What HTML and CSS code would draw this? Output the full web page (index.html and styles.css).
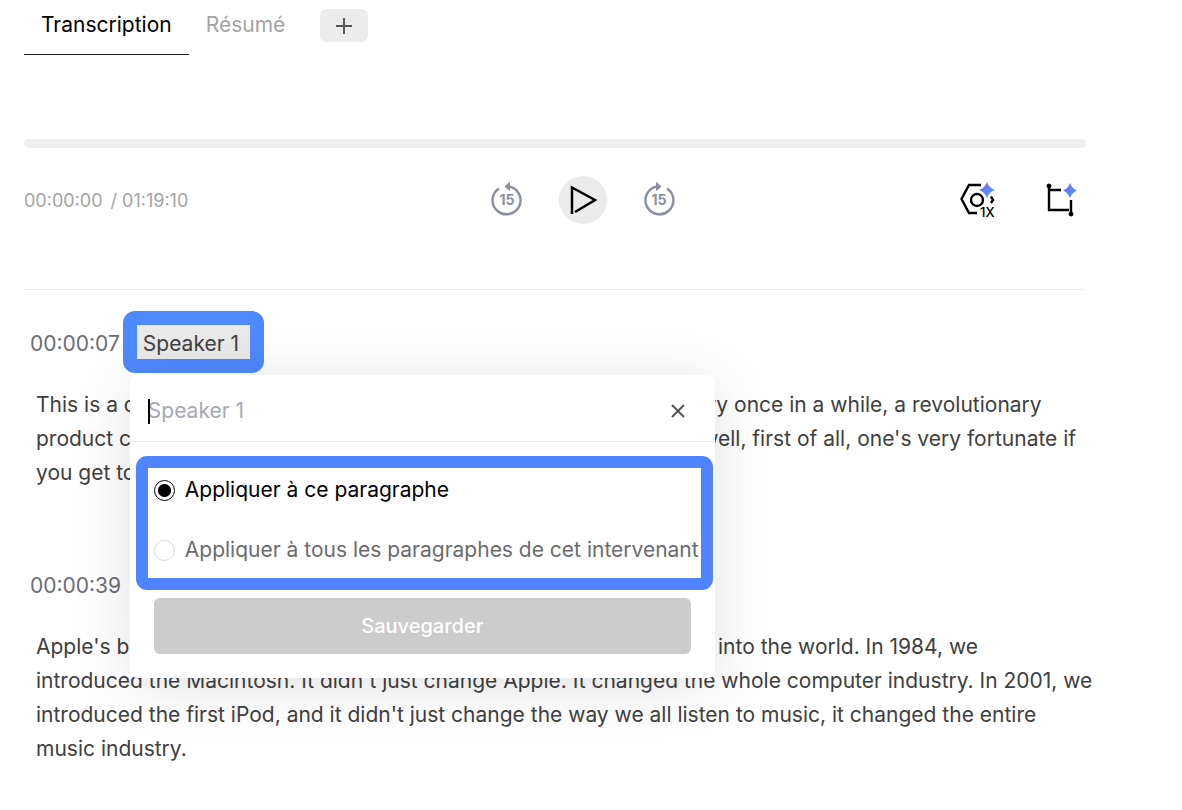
FILE: index.html
```
<!DOCTYPE html>
<html lang="fr">

<head>
    <meta charset="UTF-8">
    <meta name="viewport" content="width=device-width, initial-scale=1.0">
    <title>Transcription</title>
    <link rel="stylesheet" href="styles.css">
</head>

<body>

    <main>
        <nav class="tabs">
            <button class="tab active">Transcription</button>
            <button class="tab">Résumé</button>
            <button class="add-tab" aria-label="Ajouter">
                <svg width="16" height="16" viewBox="0 0 16 16"><path d="M8 0v16M0 8h16" stroke="#555" stroke-width="2"/></svg>
            </button>
        </nav>

        <div class="progress"></div>

        <div class="player">
            <div class="time"><span>00:00:00</span><span>/ 01:19:10</span></div>
            <div class="controls">
                <button class="skip" aria-label="Reculer de 15 secondes">
                    <svg width="32" height="36" viewBox="0 0 32 36" fill="none" stroke="#8b909c" stroke-width="2.400">
                        <path d="M8 8.500A14 14 0 1 0 18 6.500"/>
                        <path d="M14 6.500l4.500-4v8z" fill="#8b909c" stroke-width="1"/>
                        <text class="skip-text" x="16" y="25" text-anchor="middle">15</text>
                    </svg>
                </button>
                <button class="play" aria-label="Lecture">
                    <svg width="28" height="30" viewBox="0 0 28 30" fill="none" stroke="#000" stroke-width="2.500"><path d="M3 29V2.500L26 15 6 27"/></svg>
                </button>
                <button class="skip" aria-label="Avancer de 15 secondes">
                    <svg width="32" height="36" viewBox="0 0 32 36" fill="none" stroke="#8b909c" stroke-width="2.400">
                        <path d="M24 8.500A14 14 0 1 1 14 6.500"/>
                        <path d="M18 6.500l-4.500-4v8z" fill="#8b909c" stroke-width="1"/>
                        <text class="skip-text" x="16" y="25" text-anchor="middle">15</text>
                    </svg>
                </button>
            </div>
            <div class="tools">
                <button class="tool" aria-label="Vitesse de lecture">
                    <svg width="38" height="38" viewBox="0 0 38 38" fill="none" stroke="#000" stroke-width="2.400">
                        <defs>
                            <linearGradient id="spark" x1="0" y1="0" x2="1" y2="1">
                                <stop offset="0" stop-color="#7b61e0"/>
                                <stop offset="1" stop-color="#4aa5ff"/>
                            </linearGradient>
                        </defs>
                        <path d="M21 4H9L1.500 18 9 32h8"/>
                        <circle cx="17" cy="19" r="6"/>
                        <path d="M31 15.500l2 3.500-2 3"/>
                        <path d="M27 1q2 6 8 8-6 2-8 8-2-6-8-8 6-2 8-8z" fill="url(#spark)" stroke="none"/>
                        <text class="speed-text" x="20" y="36">1X</text>
                    </svg>
                </button>
                <button class="tool" aria-label="Rogner">
                    <svg width="38" height="38" viewBox="0 0 38 38" fill="none" stroke="#000" stroke-width="2.400">
                        <path d="M5 5v24h20M5 9h12M27 19v14"/>
                        <circle cx="5" cy="5" r="2" fill="#000" stroke-width="1"/>
                        <circle cx="27" cy="33" r="2" fill="#000" stroke-width="1"/>
                        <path d="M26 2q2 5.500 7 7.500-5 2-7 7.500-2-5.500-7-7.500 5-2 7-7.500z" fill="url(#spark)" stroke="none"/>
                    </svg>
                </button>
            </div>
        </div>

        <section class="transcript">
            <article class="entry">
                <div class="entry-head">
                    <span class="timestamp">00:00:07</span>
                    <div class="speaker">
                        <button class="speaker-name">Speaker 1</button>
                        <form class="popup">
                            <div class="popup-head">
                                <span class="caret"></span>
                                <input class="name-input" type="text" placeholder="Speaker 1" aria-label="Nom de l'intervenant">
                                <button class="close" type="button" aria-label="Fermer">
                                    <svg width="14" height="14" viewBox="0 0 14 14"><path d="M1 1l12 12M13 1L1 13" stroke="#555" stroke-width="2"/></svg>
                                </button>
                            </div>
                            <div class="options">
                                <label class="option"><input type="radio" name="scope" checked><span>Appliquer à ce paragraphe</span></label>
                                <label class="option"><input type="radio" name="scope"><span>Appliquer à tous les paragraphes de cet intervenant</span></label>
                            </div>
                            <button class="save" type="button">Sauvegarder</button>
                        </form>
                    </div>
                </div>
                <p>This is a day I've been looking forward to for 2 and a half years. Every once in a while, a revolutionary<br>
                    product comes along that changes everything and Apple has been well, first of all, one's very fortunate if<br>
                    you get to work on just one of these.</p>
            </article>
            <article class="entry">
                <div class="entry-head">
                    <span class="timestamp">00:00:39</span>
                </div>
                <p>Apple's been very fortunate. It's been able to introduce few of these into the world. In 1984, we<br>
                    introduced the Macintosh. It didn't just change Apple. It changed the whole computer industry. In 2001, we<br>
                    introduced the first iPod, and it didn't just change the way we all listen to music, it changed the entire<br>
                    music industry.</p>
            </article>
        </section>
    </main>

</body>

</html>
```
FILE: styles.css
```
* {
    box-sizing: border-box;
}

body {
    font-family: Inter, 'Liberation Sans', sans-serif;
    font-size: 21px;
    color: #404040;
    background: #fff;
    margin: 0;
}

button,
input {
    font: inherit;
    color: inherit;
    border: none;
    background: none;
    padding: 0;
    margin: 0;
}

button {
    cursor: pointer;
}

svg {
    display: block;
    overflow: visible;
}

main {
    padding: 0 96px 0 24px;
}

.tabs {
    display: flex;
    align-items: flex-start;
}

.tab {
    line-height: 30px;
    padding: 10px 17px 14px;
    color: #a3a3a3;
    border-bottom: 1px solid transparent;
}

.tab.active {
    color: #000;
    border-bottom-color: #222;
}

.add-tab {
    display: flex;
    align-items: center;
    justify-content: center;
    width: 48px;
    height: 33px;
    margin: 9px 0 0 18px;
    border-radius: 7px;
    background: #ebebeb;
}

.progress {
    height: 9px;
    margin-top: 84px;
    border-radius: 5px;
    background: #efefef;
}

.player {
    display: flex;
    align-items: center;
    justify-content: space-between;
    margin-top: 28px;
    padding: 0 4px 65px 0;
    border-bottom: 1px solid #ebebeb;
}

.time {
    display: flex;
    gap: 8px;
    min-width: 182px;
    font-size: 18px;
    color: #a3a3a3;
}

.controls {
    display: flex;
    align-items: center;
    gap: 36px;
}

.skip {
    padding-bottom: 4px;
}

.skip-text {
    font-size: 14px;
    font-weight: 700;
    fill: #8b909c;
    stroke: none;
}

.play {
    display: flex;
    align-items: center;
    justify-content: center;
    width: 48px;
    height: 48px;
    border-radius: 50%;
    background: #ebebeb;
}

.tools {
    display: flex;
    gap: 46px;
}

.speed-text {
    font-size: 13px;
    font-weight: 500;
    fill: #000;
    stroke: none;
}

.transcript {
    padding: 37px 0 40px 6px;
}

.entry {
    margin-bottom: 79px;
}

.entry:last-child {
    margin-bottom: 0;
}

.entry-head {
    display: flex;
    gap: 17px;
    line-height: 34px;
}

.timestamp {
    color: #6b6d75;
}

.entry p {
    margin: 27px 0 0 6px;
    line-height: 34px;
    white-space: nowrap;
}

.speaker {
    position: relative;
    z-index: 1;
}

.speaker-name {
    display: block;
    padding: 0 11px 0 6px;
    line-height: 34px;
}

/* highlight around the speaker name */
.speaker-name::before {
    content: "";
    position: absolute;
    inset: -16px -14px -12px -14px;
    z-index: -1;
    border: 14px solid #4f89ff;
    border-radius: 12px;
    background: #e9e9e9;
}

.popup {
    position: absolute;
    top: 48px;
    left: -7px;
    width: 585px;
    padding-bottom: 24px;
    border-radius: 7px;
    background: #fff;
    box-shadow: 0 8px 60px rgba(0, 0, 0, 0.12);
}

.popup-head {
    display: flex;
    align-items: center;
    position: relative;
    padding: 18px 30px 12px 18px;
    height: 67px;
    border-bottom: 1px solid #ebebeb;
}

.caret {
    position: absolute;
    left: 18px;
    width: 2px;
    height: 25px;
    background: #000;
}

.name-input {
    flex: 1;
    min-width: 0;
    outline: none;
}

.name-input::placeholder {
    color: #a5a9b5;
    opacity: 1;
}

.options {
    display: flex;
    flex-direction: column;
    gap: 30px;
    margin: 14px 2px 8px 6px;
    padding: 7px 0 13px 6px;
    border: 12px solid #4f83ff;
    border-radius: 11px;
}

.option {
    display: flex;
    align-items: center;
    gap: 10px;
    line-height: 30px;
    color: #6b6b6e;
    white-space: nowrap;
}

.option input {
    appearance: none;
    flex: none;
    width: 21px;
    height: 21px;
    border: 1px solid #d9d9d9;
    border-radius: 50%;
}

.option input:checked {
    border-color: #000;
    background: radial-gradient(circle, #000 6px, #fff 7px);
}

.option:has(input:checked) {
    color: #000;
}

.save {
    display: block;
    width: calc(100% - 48px);
    height: 56px;
    margin: 0 24px;
    border-radius: 6px;
    font-size: 20px;
    font-weight: 500;
    color: #fff;
    background: #ccc;
}
```
